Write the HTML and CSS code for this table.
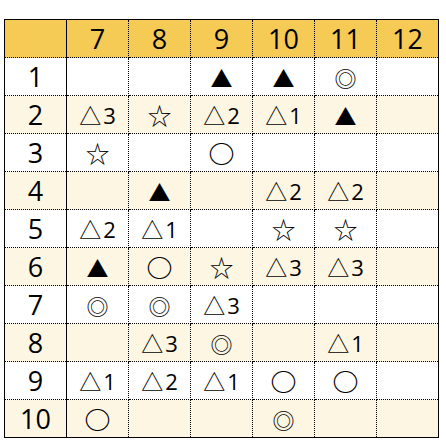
FILE: index.html
```html
<!DOCTYPE html>
<html lang="ja">
<head>
<meta charset="utf-8">
<link rel="stylesheet" href="styles.css">
</head>
<body>
<table class="grid">
  <thead>
    <tr class="head"><th class="lab"></th><th>7</th><th>8</th><th>9</th><th>10</th><th>11</th><th>12</th></tr>
  </thead>
  <tbody>
    <tr><th class="lab">1</th><td></td><td></td><td>▲</td><td>▲</td><td>◎</td><td></td></tr>
    <tr class="alt"><th class="lab">2</th><td>△<span class="n">3</span></td><td><span class="s">☆</span></td><td>△<span class="n">2</span></td><td>△<span class="n">1</span></td><td>▲</td><td></td></tr>
    <tr><th class="lab">3</th><td><span class="s">☆</span></td><td></td><td><span class="o">○</span></td><td></td><td></td><td></td></tr>
    <tr class="alt"><th class="lab">4</th><td></td><td>▲</td><td></td><td>△<span class="n">2</span></td><td>△<span class="n">2</span></td><td></td></tr>
    <tr><th class="lab">5</th><td>△<span class="n">2</span></td><td>△<span class="n">1</span></td><td></td><td><span class="s">☆</span></td><td><span class="s">☆</span></td><td></td></tr>
    <tr class="alt"><th class="lab">6</th><td>▲</td><td><span class="o">○</span></td><td><span class="s">☆</span></td><td>△<span class="n">3</span></td><td>△<span class="n">3</span></td><td></td></tr>
    <tr><th class="lab">7</th><td>◎</td><td>◎</td><td>△<span class="n">3</span></td><td></td><td></td><td></td></tr>
    <tr class="alt"><th class="lab">8</th><td></td><td>△<span class="n">3</span></td><td>◎</td><td></td><td>△<span class="n">1</span></td><td></td></tr>
    <tr><th class="lab">9</th><td>△<span class="n">1</span></td><td>△<span class="n">2</span></td><td>△<span class="n">1</span></td><td><span class="o">○</span></td><td><span class="o">○</span></td><td></td></tr>
    <tr class="alt"><th class="lab">10</th><td><span class="o">○</span></td><td></td><td></td><td>◎</td><td></td><td></td></tr>
  </tbody>
</table>
</body>
</html>
```
FILE: styles.css
```css
html, body {
  margin: 0;
  padding: 0;
  background: #fff;
}
body {
  padding: 19px 0 0 4px;
  font-family: "Open Sans", "Noto Sans CJK JP", sans-serif;
  color: #000;
}
.grid {
  border-collapse: collapse;
  table-layout: fixed;
  border: 1.5px solid #000;
}
.grid th, .grid td {
  width: 61px;
  height: 37px;
  padding: 0;
  text-align: center;
  vertical-align: middle;
  border: 1px dotted #000;
  font-weight: normal;
  line-height: 1;
}
.grid th {
  font-size: 27px;
}
.grid td {
  font-size: 22px;
  font-family: "Noto Sans CJK JP", sans-serif;
}
.grid .lab {
  border-right: 1px solid #000;
}
.head th {
  background: #f5ca55;
}
.alt td, .alt th {
  background: #fdf6e3;
}
.n {
  font-family: "Open Sans", sans-serif;
  font-size: 22px;
  margin-left: 2px;
}
.o {
  display: inline-block;
  font-size: 26px;
  font-weight: 700;
  transform: scaleY(0.9);
}
.s {
  font-size: 24px;
}
```
